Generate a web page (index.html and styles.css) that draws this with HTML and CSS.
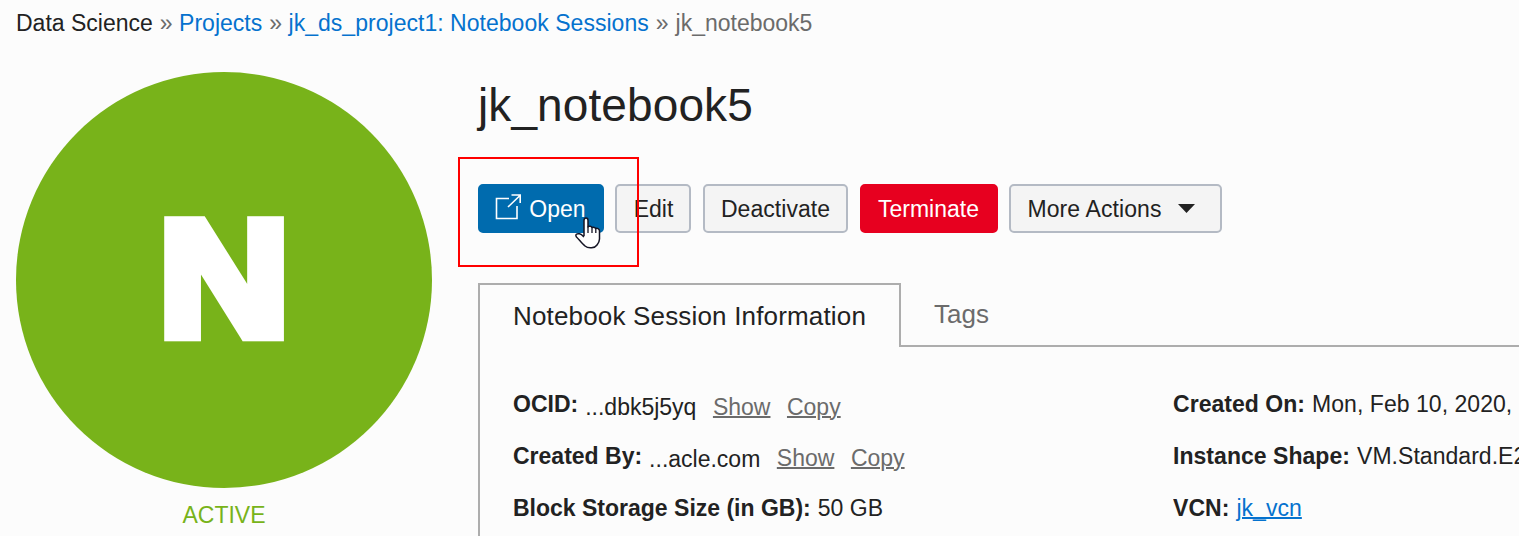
FILE: index.html
```html
<!DOCTYPE html>
<html lang="en">
<head>
<meta charset="utf-8">
<title>jk_notebook5</title>
<link rel="stylesheet" href="styles.css">
</head>
<body>
<nav class="breadcrumb">
  <span class="crumb-root">Data Science</span>
  <span class="sep">»</span>
  <a class="crumb-projects">Projects</a>
  <span class="sep">»</span>
  <a class="crumb-sessions">jk_ds_project1: Notebook Sessions</a>
  <span class="sep">»</span>
  <span class="crumb-current">jk_notebook5</span>
</nav>
<main class="page">
  <aside class="status">
    <div class="badge"><span class="badge-letter">N</span></div>
    <div class="state">ACTIVE</div>
  </aside>
  <section class="detail">
    <h1 class="title">jk_notebook5</h1>
    <div class="actions">
      <button class="btn primary">
        <svg class="open-icon" width="26" height="26" viewBox="0 0 26 26" fill="none" stroke="#fff" stroke-width="1.6"><path d="M14 4.500H1.500V24.500H22V12M13 13L25 1.500M16.500 1H25.200V9"/></svg>
        <span>Open</span>
      </button>
      <button class="btn edit">Edit</button>
      <button class="btn deactivate">Deactivate</button>
      <button class="btn danger">Terminate</button>
      <button class="btn more"><span class="more-label">More Actions</span>
        <svg class="caret" width="17" height="9" viewBox="0 0 17 9"><path d="M0 0H17L8.500 9Z" fill="#222"/></svg>
      </button>
      <div class="highlight"></div>
      <svg class="cursor" width="26" height="32" viewBox="0 0 26 32"><path d="M9 19V3.500C9 1.700 10 1 11 1S13 1.700 13 3.500V10.500C13 9.500 14 9 15.200 9.200S17 10 17 11C17.200 10 19.500 9.500 20.700 11.500C22 10.800 24.500 11.500 24.500 14V22C24.500 24 23.500 26 22 28C20 31 13.500 32 10 29C7.500 27 4 22.500 1.500 20C-.2 17.500 2 16.300 4.500 16.800C6.500 17.300 8 19 9 20" fill="#fff" stroke="#151525" stroke-width="1.500"/><path d="M13 9.500V16M17 10.500V16M20.800 11.500V16" stroke="#151525" stroke-width="1.300"/></svg>
    </div>
    <div class="tabs">
      <div class="tab active">Notebook Session Information</div>
      <div class="tab">Tags</div>
    </div>
    <div class="panel">
      <div class="column">
        <div class="row"><b>OCID:</b><span class="hash">...dbk5j5yq</span><a class="link">Show</a><a class="link">Copy</a></div>
        <div class="row"><b>Created By:</b><span class="hash">...acle.com</span><a class="link raised">Show</a><a class="link raised">Copy</a></div>
        <div class="row"><b>Block Storage Size (in GB):</b><span class="value">50 GB</span></div>
      </div>
      <div class="column side">
        <div class="row"><b>Created On:</b><span class="value">Mon, Feb 10, 2020,</span></div>
        <div class="row"><b>Instance Shape:</b><span class="value">VM.Standard.E2</span></div>
        <div class="row"><b>VCN:</b><a class="value vcn">jk_vcn</a></div>
      </div>
    </div>
  </section>
</main>
</body>
</html>
```
FILE: styles.css
```css
* { box-sizing: border-box; }
body {
  margin: 0;
  width: 1519px;
  height: 536px;
  overflow: hidden;
  background: #fcfcfc;
  color: #222;
  font: 23px/28px "Liberation Sans", Arial, sans-serif;
}
.breadcrumb { display: flex; gap: 7px; padding: 9px 16px 0; height: 72px; white-space: nowrap; }
.breadcrumb a { color: #0572ce; }
.crumb-projects { margin-left: -0.5px; }
.crumb-sessions { margin-left: -0.5px; letter-spacing: 0.03px; }
.sep, .crumb-current { color: #6b6b6b; }
.page { display: flex; height: 464px; }
.status { width: 478px; flex: none; padding-left: 16px; }
.badge {
  width: 416px;
  height: 416px;
  border-radius: 50%;
  background: #78b31a;
  display: flex;
  align-items: center;
  justify-content: center;
}
.badge-letter {
  font: 700 164px/1 "Liberation Sans", Arial, sans-serif;
  color: #fff;
  -webkit-text-stroke: 12.4px #fff;
  transform: translateY(-1px) scaleX(1.1);
}
.state { width: 416px; padding-top: 13px; text-align: center; color: #78b31a; }
.detail { width: 1041px; flex: none; }
.title { margin: 0; height: 112px; padding-top: 5px; font-size: 46px; line-height: 56px; font-weight: 400; letter-spacing: 0.1px; }
.actions { position: relative; display: flex; height: 99px; align-items: flex-start; }
.btn {
  height: 49px;
  margin: 0 12px 0 0;
  padding: 0;
  display: flex;
  align-items: center;
  justify-content: center;
  border: 2px solid #b4bac4;
  border-radius: 5px;
  background: #f4f4f4;
  color: #222;
  font: inherit;
  white-space: nowrap;
}
.primary { width: 126px; margin-right: 11px; padding-right: 1px; gap: 8px; border-color: #006bae; background: #006bae; color: #fff; }
.open-icon { margin-top: -4px; }
.edit { width: 76px; padding-left: 1px; }
.deactivate { width: 145px; letter-spacing: 0.05px; }
.danger { width: 138px; margin-right: 11px; padding-right: 1px; border-color: #e7001f; background: #e7001f; color: #fff; }
.more { width: 213px; gap: 16px; padding-right: 9px; }
.more-label { letter-spacing: 0.1px; }
.highlight { position: absolute; left: -20px; top: -27px; width: 181px; height: 110px; border: 2px solid #f00; }
.cursor { position: absolute; left: 97px; top: 33px; }
.tabs { display: flex; height: 64px; font-size: 26px; }
.tab { flex: 1; padding: 17px 33px 0; border-bottom: 2px solid #adadad; color: #6b6b6b; }
.tab.active { flex: none; width: 423px; padding: 17px 0 0 33px; border: 2px solid #adadad; border-bottom: 0; color: #222; white-space: nowrap; letter-spacing: 0.17px; }
.panel { display: flex; height: 189px; padding: 31px 0 0 33px; border-left: 2px solid #adadad; }
.column { width: 660px; flex: none; }
.side { width: 346px; overflow: hidden; letter-spacing: 0.04px; }
.row { display: flex; height: 52px; align-items: center; white-space: nowrap; }
.value { margin-left: 7px; }
.hash { margin-left: 7px; padding-top: 6px; }
.link { margin-left: 16.5px; padding-top: 6px; color: #6b6b6b; text-decoration: underline; text-decoration-thickness: 2px; }
.raised { padding-top: 4px; }
.vcn { color: #0572ce; text-decoration: underline; text-decoration-thickness: 2px; }
```
